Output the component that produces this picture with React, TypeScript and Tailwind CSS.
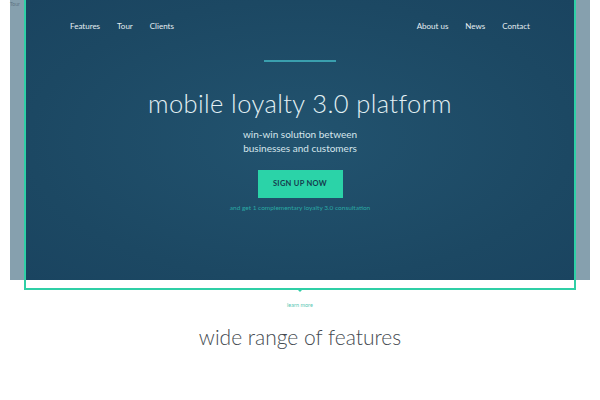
import React from 'react';

const leftLinks = ['Features', 'Tour', 'Clients'];
const rightLinks = ['About us', 'News', 'Contact'];

export default function App() {
  return (
    <div className="relative min-h-screen w-full bg-white font-['Lato','Open_Sans',sans-serif]">
      {/* stray label */}
      <span className="absolute left-[10px] top-0 z-10 text-[5px] leading-[8px] text-[#5d7482]">Tour</span>

      {/* Hero band */}
      <div className="mx-[10px] h-[280px] bg-[#86a0ae] px-[14px]">
        <div className="relative h-[290px] border-x-2 border-b-2 border-[#2fcfa6]">
          <div className="flex h-[280px] flex-col items-center bg-[radial-gradient(ellipse_at_center,#22536f_0%,#1c4863_70%,#1a4460_100%)] px-[44px]">
            {/* Nav */}
            <nav className="flex w-full items-center justify-between pt-[20px] text-[8px] leading-[12px] text-[#e6eef2]">
              <div className="flex gap-[17px]">
                {leftLinks.map((l) => (
                  <a key={l} href="#">{l}</a>
                ))}
              </div>
              <div className="flex gap-[17px]">
                {rightLinks.map((l) => (
                  <a key={l} href="#">{l}</a>
                ))}
              </div>
            </nav>

            <div className="mt-[28px] h-[2px] w-[72px] bg-[#3a9fae]" />

            <h1 className="mt-[26px] text-[25.5px] font-light leading-[30px] tracking-[0.4px] text-[#e3f0f4]">
              mobile loyalty 3.0 platform
            </h1>

            <p className="mt-[9px] text-center text-[10px] leading-[14px] text-[#d6e6ec]">
              win-win solution between
              <br />
              businesses and customers
            </p>

            <button className="mt-[15px] flex h-[28px] w-[85px] items-center justify-center bg-[#2bd3a8] text-[7.5px] font-bold tracking-[0.3px] text-[#153b4e]">
              SIGN UP NOW
            </button>

            <p className="mt-[6px] text-[6.5px] leading-[8px] text-[#2aa9a4]">
              and get 1 complementary loyalty 3.0 consultation
            </p>
          </div>

          {/* pointer */}
          <div className="absolute left-1/2 top-full h-0 w-0 -translate-x-1/2 border-x-[4px] border-t-[4px] border-x-transparent border-t-[#2fcfa6]" />
        </div>
      </div>

      <div className="mt-[21px] flex justify-center">
        <a href="#" className="text-[5.5px] leading-[8px] text-[#58c7b3]">learn more</a>
      </div>

      <h2 className="mt-[15px] text-center text-[21px] font-light leading-[26px] text-[#444a50]">
        wide range of features
      </h2>
    </div>
  );
}
